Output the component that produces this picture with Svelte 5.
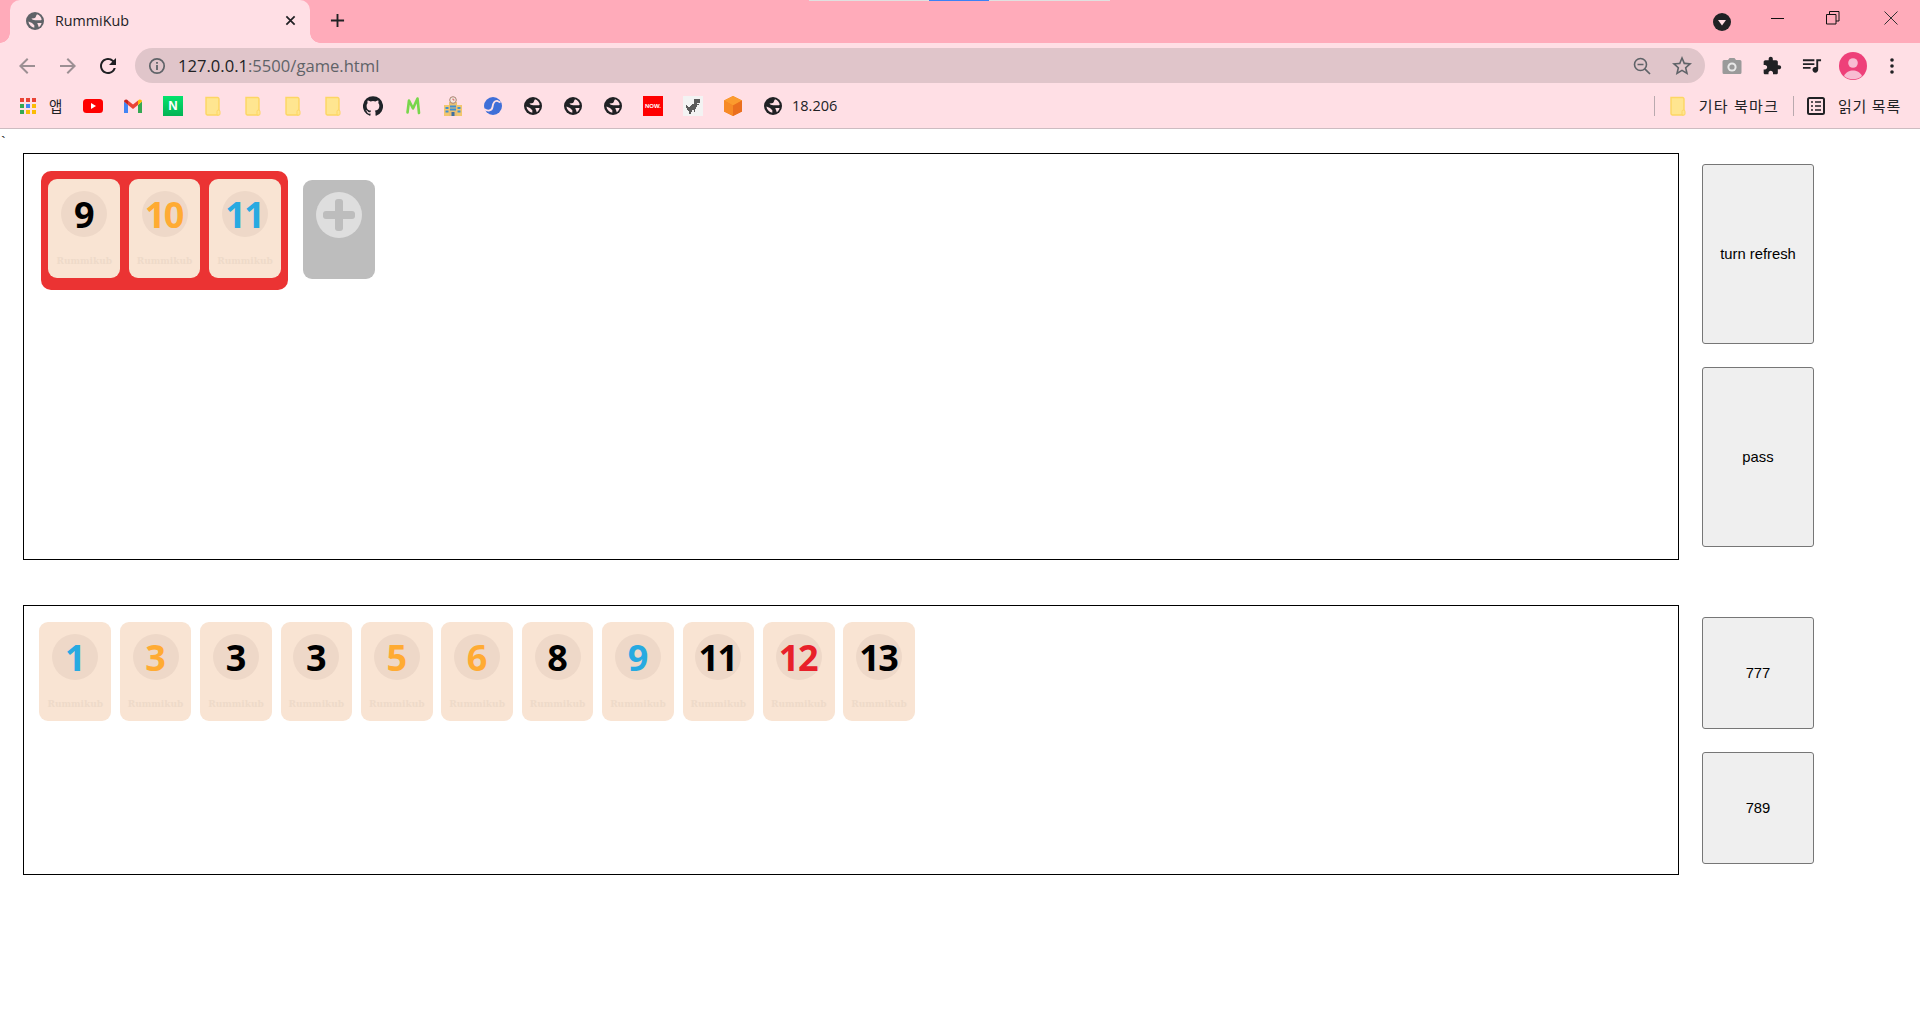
<script>
  const board = [[9, "k"], [10, "o"], [11, "b"]];
  const hand = [[1, "b"], [3, "o"], [3, "k"], [3, "k"], [5, "o"], [6, "o"], [8, "k"], [9, "b"], [11, "k"], [12, "r"], [13, "k"]];
  const appColors = ["#ea4335", "#ea4335", "#ea4335", "#34a853", "#4285f4", "#fbbc05", "#34a853", "#fbbc05", "#fbbc05"];
</script>

{#snippet tile(n, c)}
  <div class="tile">
    <div class="circle"><span class="num {c}">{n}</span></div>
    <div class="brand">Rummikub</div>
  </div>
{/snippet}

{#snippet folder()}
  <svg class="ic16" viewBox="0 0 16 20"><path d="M1 1.5h11.5a1.5 1.5 0 0 1 1.5 1.5v15a1 1 0 0 1-1 1H2.5A1.5 1.5 0 0 1 1 17.5z" fill="#ffe590" stroke="#fdd663" stroke-width="1.4"/><path d="M12 19v-3.5a1.5 1.5 0 0 1 3 0V18a1 1 0 0 1-1 1z" fill="#ffe590" stroke="#fdd663"/></svg>
{/snippet}

{#snippet globeIcon(dark)}
  <svg class="ic18" viewBox="0 0 18 18">
    <circle cx="9" cy="9" r="9" fill={dark ? "#202124" : "#5f6368"}/>
    <path fill="#ffdfe5" d="M11 2.300C13.500 3 15.200 5 15.700 7.500L15 8.200H9.200C7.500 8.200 6 7.600 5.500 6.600L8 6.200C9.200 6 10 5 10 4z"/>
    <path fill="#ffdfe5" d="M2.400 9.500L6 11L8.300 13.300V15.700C5 15.200 2.900 12.500 2.400 9.500z"/>
    <path fill="#ffdfe5" d="M11.300 11H15.600C15.200 12.800 14.200 14.300 12.700 15.200C12.500 13.500 11.500 12.200 11.300 11z"/>
  </svg>
{/snippet}

<div class="chrome">
  <div class="share"><i class="g1"></i><i class="g2"></i><i class="g3"></i></div>
  <div class="strip">
    <div class="tab">
      {@render globeIcon(false)}
      <span class="title">RummiKub</span>
      <svg class="tabx" viewBox="0 0 12 12"><path d="M1.500 1.500l9 9M10.500 1.500l-9 9" stroke="#202124" stroke-width="1.900"/></svg>
    </div>
    <svg class="newtab" viewBox="0 0 16 16"><path d="M8 1v14M1 8h14" stroke="#202124" stroke-width="2"/></svg>
    <div class="wincontrols">
      <svg class="media" viewBox="0 0 18 18"><circle cx="9" cy="9" r="9" fill="#202124"/><path d="M5 7h8l-4 5.500z" fill="#ffdfe5"/></svg>
      <svg class="wc min" viewBox="0 0 14 14"><path d="M0 7.500h13" stroke="#111" stroke-width="1"/></svg>
      <svg class="wc max" viewBox="0 0 14 14"><path d="M.5 3.500h9.500v9.500H.5zM3.500 3.500V.5h9.500v9.500H10" fill="none" stroke="#111"/></svg>
      <svg class="wc cls" viewBox="0 0 14 14"><path d="M.5.5l13 13M13.500.5l-13 13" stroke="#333" stroke-width="1"/></svg>
    </div>
  </div>

  <div class="toolbar">
    <div class="nav">
      <svg class="nb" viewBox="0 0 24 24"><path fill="#9c8f93" d="M20 11H7.830l5.590-5.590L12 4l-8 8 8 8 1.410-1.410L7.830 13H20v-2z"/></svg>
      <svg class="nb" viewBox="0 0 24 24"><path fill="#9c8f93" d="M4 11h12.170l-5.590-5.590L12 4l8 8-8 8-1.410-1.410L16.170 13H4v-2z"/></svg>
      <svg class="nb reload" viewBox="0 0 24 24"><path fill="#202124" d="M17.650 6.350A7.950 7.950 0 0 0 12 4c-4.420 0-7.990 3.580-7.990 8s3.570 8 7.990 8c3.730 0 6.840-2.550 7.730-6h-2.080A5.990 5.990 0 0 1 12 18c-3.310 0-6-2.690-6-6s2.690-6 6-6c1.660 0 3.140.690 4.220 1.780L13 11h7V4l-2.350 2.350z"/></svg>
    </div>
    <div class="omni">
      <svg class="info" viewBox="0 0 18 18"><circle cx="9" cy="9" r="7.200" fill="none" stroke="#5f6368" stroke-width="1.700"/><path d="M9 8v5M9 5v1.800" stroke="#5f6368" stroke-width="1.800"/></svg>
      <span class="url"><b>127.0.0.1</b>:5500/game.html</span>
      <svg class="oi zoomout" viewBox="0 0 18 18"><circle cx="7.500" cy="7.500" r="6" fill="none" stroke="#5f6368" stroke-width="1.600"/><path d="M4.500 7.500h6M11.800 11.800l5.200 5.200" stroke="#5f6368" stroke-width="1.700"/></svg>
      <svg class="oi star" viewBox="0 0 24 24"><path fill="#5f6368" d="M22 9.240l-7.190-.620L12 2 9.190 8.630 2 9.240l5.460 4.730L5.820 21 12 17.270 18.180 21l-1.630-7.030L22 9.240zM12 15.400l-3.760 2.270 1-4.280-3.320-2.880 4.380-.380L12 6.100l1.710 4.040 4.380.380-3.320 2.880 1 4.280L12 15.400z"/></svg>
    </div>
    <div class="actions">
      <svg class="act" viewBox="0 0 20 18"><path fill="#9a9a9a" d="M2 3h4l1.500-2h5L14 3h4a1.500 1.500 0 0 1 1.500 1.500v11A1.500 1.500 0 0 1 18 17H2a1.500 1.500 0 0 1-1.500-1.500v-11A1.500 1.500 0 0 1 2 3z"/><circle cx="10" cy="10" r="4.600" fill="#e8e8e8"/><circle cx="10" cy="10" r="2.600" fill="#9a9a9a"/></svg>
      <svg class="act" viewBox="0 0 24 24"><path fill="#202124" d="M20.500 11H19V7c0-1.100-.9-2-2-2h-4V3.500C13 2.120 11.880 1 10.500 1S8 2.120 8 3.500V5H4c-1.100 0-1.990.9-1.990 2v3.800H3.500c1.490 0 2.700 1.210 2.700 2.700s-1.210 2.700-2.700 2.700H2V20c0 1.100.9 2 2 2h3.800v-1.500c0-1.490 1.210-2.700 2.700-2.700 1.490 0 2.700 1.210 2.700 2.700V22H17c1.100 0 2-.9 2-2v-4h1.500c1.380 0 2.500-1.120 2.500-2.500S21.880 11 20.500 11z"/></svg>
      <svg class="act" viewBox="2 5 21 16"><path fill="#202124" d="M15 6H3v2h12V6zm0 4H3v2h12v-2zM3 16h8v-2H3v2zM17 6v8.180c-.31-.11-.65-.18-1-.18-1.660 0-3 1.340-3 3s1.340 3 3 3 3-1.340 3-3V8h3V6h-5z"/></svg>
      <svg class="avatar" viewBox="0 0 28 28"><circle cx="14" cy="14" r="14" fill="#ee4079"/><circle cx="14" cy="11" r="4.800" fill="#f8bcd2"/><path d="M5 24c2-4 5.500-5.500 9-5.500s7 1.500 9 5.500a14 14 0 0 1-18 0z" fill="#f8bcd2"/></svg>
      <svg class="dots" viewBox="0 0 4 16"><circle cx="2" cy="2" r="1.800" fill="#202124"/><circle cx="2" cy="8" r="1.800" fill="#202124"/><circle cx="2" cy="14" r="1.800" fill="#202124"/></svg>
    </div>
  </div>

  <div class="bookmarks">
    <div class="apps">
      <div class="appgrid">{#each appColors as c}<i style="background:{c}"></i>{/each}</div>
      <span class="bmtext app">앱</span>
    </div>
    <div class="slot"><svg class="yt" viewBox="0 0 20 14"><rect width="20" height="14" rx="3.500" fill="#f00"/><path d="M8 4l5 3-5 3z" fill="#fff"/></svg></div>
    <div class="slot"><svg class="gm" viewBox="0 0 18 14"><path d="M0 2.500V14h4V6z" fill="#4285f4"/><path d="M18 2.500V14h-4V6z" fill="#34a853"/><path d="M4 6V1.500l5 4 5-4V6L9 10z" fill="#ea4335"/><path d="M0 2.500C0 .5 2.500-.5 4 1.500V6z" fill="#c5221f"/><path d="M18 2.500C18 .5 15.500-.5 14 1.500V6z" fill="#fbbc04"/></svg></div>
    <div class="slot"><div class="naver">N</div></div>
    <div class="slot">{@render folder()}</div>
    <div class="slot">{@render folder()}</div>
    <div class="slot">{@render folder()}</div>
    <div class="slot">{@render folder()}</div>
    <div class="slot"><svg class="ic20" viewBox="0 0 24 24"><path fill="#1f2328" d="M12 .3a12 12 0 0 0-3.800 23.400c.6.1.8-.3.8-.6v-2c-3.300.7-4-1.600-4-1.600-.6-1.400-1.400-1.800-1.400-1.800-1-.7.1-.7.1-.7 1.200 0 1.900 1.200 1.900 1.200 1 1.800 2.800 1.300 3.500 1 0-.8.4-1.300.7-1.600-2.700-.3-5.500-1.300-5.500-6 0-1.200.5-2.300 1.300-3.100-.2-.4-.6-1.600 0-3.200 0 0 1-.3 3.400 1.200a11.500 11.500 0 0 1 6 0c2.300-1.500 3.300-1.200 3.300-1.200.6 1.600.2 2.800 0 3.200.9.8 1.300 1.900 1.300 3.200 0 4.600-2.800 5.600-5.500 5.900.5.400.9 1 .9 2.200v3.300c0 .3.1.7.8.6A12 12 0 0 0 12 .3"/></svg></div>
    <div class="slot"><svg class="ic20" viewBox="0 0 16 20"><path d="M2.500 16.500L4 4.500l4 8 4.500-10 1.500 14.500" fill="none" stroke="#78d64b" stroke-width="2.600" stroke-linecap="round" stroke-linejoin="round"/></svg></div>
    <div class="slot"><svg class="ic20" viewBox="0 0 20 20"><rect x="1" y="9" width="18" height="11" fill="#f2c66d"/><rect x="6" y="6" width="8" height="14" fill="#e9bf73"/><path d="M2.500 11h3v2h-3zM2.500 14.500h3v2h-3zM14.500 11h3v2h-3zM14.500 14.500h3v2h-3zM7 9.500h6v2H7zM7 12.500h6v2H7z" fill="#3f8fd0"/><rect x="8.500" y="16" width="3" height="4" fill="#3f6fa0"/><circle cx="10" cy="4" r="3.300" fill="#f4e7e0" stroke="#a9826f"/><path d="M10 2.500V4h1.500" stroke="#d14343" fill="none" stroke-width=".8"/></svg></div>
    <div class="slot"><svg class="ic18" viewBox="0 0 18 18"><circle cx="9" cy="9" r="9" fill="#3f6fd8"/><path d="M0 12c4 3 8 1.500 8.500-2s1.500-6.500 5-6l3 1.500" fill="none" stroke="#ffdfe5" stroke-width="1.800"/></svg></div>
    <div class="slot">{@render globeIcon(true)}</div>
    <div class="slot">{@render globeIcon(true)}</div>
    <div class="slot">{@render globeIcon(true)}</div>
    <div class="slot"><div class="now">NOW.</div></div>
    <div class="slot"><svg class="dino" viewBox="0 0 20 20"><rect width="20" height="20" fill="#f3f3f3"/><path fill="#5a5a5a" d="M11 3h6v4h-3v1h2v1h-2v2h-1v2h-1v3h-1v-2H9v2H8v2H6v-3H5v-1H4v-2H3V9h1v1h1v1h2v-1h1V9h1V8h2z"/></svg></div>
    <div class="slot"><svg class="ic20" viewBox="0 0 20 20"><path d="M10 0l9 4.500v11L10 20 1 15.500v-11z" fill="#f58220"/><path d="M10 0l9 4.500-9 5-9-5z" fill="#fb9b2e"/><path d="M10 9.500V20l-9-4.500v-11z" fill="#f78a26"/><path d="M10 9.500l9-5v11L10 20z" fill="#ea6f1e"/></svg></div>
    <div class="slot">{@render globeIcon(true)}</div>
    <span class="bmtext num18">18.206</span>
    <div class="bmright">
      <i class="sep"></i>
      {@render folder()}
      <span class="bmtext other">기타 북마크</span>
      <i class="sep sep2"></i>
      <svg class="ic18 rl" viewBox="0 0 18 18"><rect x="1" y="1" width="16" height="16" rx="1.500" fill="none" stroke="#202124" stroke-width="2"/><path d="M4 5h2M8 5h6M4 9h2M8 9h6M4 13h2M8 13h6" stroke="#202124" stroke-width="1.600"/></svg>
      <span class="bmtext read">읽기 목록</span>
    </div>
  </div>
</div>

<main class="page">
  <div class="tick">`</div>
  <section class="row board-row">
    <div class="panel board">
      <div class="set">
        {#each board as [n, c]}{@render tile(n, c)}{/each}
      </div>
      <div class="addtile">
        <div class="addcircle"><i class="bar h"></i><i class="bar v"></i></div>
      </div>
    </div>
    <div class="side tall">
      <button>turn refresh</button>
      <button>pass</button>
    </div>
  </section>
  <section class="row hand-row">
    <div class="panel hand">
      {#each hand as [n, c]}{@render tile(n, c)}{/each}
    </div>
    <div class="side short">
      <button>777</button>
      <button>789</button>
    </div>
  </section>
</main>

<style>
  :global(body) { margin: 0; background: #fff; }
  * { box-sizing: border-box; }
  .chrome { position: relative; font-family: "Open Sans", "Noto Sans CJK KR", sans-serif; color: #202124; }

  .share { position: absolute; left: 809px; top: 0; display: flex; height: 1px; z-index: 2; }
  .share i { display: block; height: 1px; }
  .g1 { width: 120px; background: #e0e0e0; }
  .g2 { width: 60px; background: #3b82f6; }
  .g3 { width: 121px; background: #e0e0e0; }

  .strip { height: 43px; background: #ffabba; display: flex; align-items: center; padding-left: 10px; }
  .tab { position: relative; align-self: stretch; width: 300px; background: #ffdfe5; border-radius: 10px 10px 0 0; display: flex; align-items: center; padding: 0 14px 2px 16px; }
  .tab::before, .tab::after { content: ""; position: absolute; bottom: 0; width: 10px; height: 10px; }
  .tab::before { left: -10px; background: radial-gradient(circle at 0 0, #ffabba 9.500px, #ffdfe5 10px); }
  .tab::after { right: -10px; background: radial-gradient(circle at 100% 0, #ffabba 9.500px, #ffdfe5 10px); }
  .title { margin-left: 11px; font-size: 14.300px; flex: 1; }
  .tabx { width: 11px; height: 11px; }
  .newtab { width: 15px; height: 15px; margin-left: 20px; margin-bottom: 2px; }
  .wincontrols { margin-left: auto; display: flex; align-items: center; padding-right: 22px; }
  .media { width: 18px; height: 18px; margin-right: 40px; margin-top: 1px; }
  .wc { width: 14px; height: 14px; margin-top: -8px; }
  .min { margin-right: 41px; }
  .max { margin-right: 44px; }

  .toolbar { height: 40px; background: #ffdfe5; display: flex; align-items: center; padding-top: 5px; }
  .nav { width: 135px; display: flex; align-items: center; padding-left: 15px; gap: 17px; }
  .nb { width: 24px; height: 24px; }
  .reload { margin-left: -1px; }
  .omni { width: 1570px; height: 35px; border-radius: 18px; background: #e0c5ca; display: flex; align-items: center; padding-left: 13px; padding-right: 11px; }
  .info { width: 18px; height: 18px; }
  .url { margin-left: 12px; font-size: 16.600px; color: #5f6368; flex: 1; }
  .url b { font-weight: 400; color: #202124; }
  .oi { flex: none; }
  .zoomout { width: 18px; height: 18px; margin-right: 19px; }
  .star { width: 24px; height: 24px; }
  .actions { flex: 1; display: flex; align-items: center; padding-left: 17px; }
  .act { width: 20px; height: 20px; margin-right: 20px; }
  .avatar { width: 28px; height: 28px; margin-left: -3px; }
  .dots { width: 4px; height: 16px; margin-left: 23px; }

  .bookmarks { height: 46px; background: #ffdfe5; border-bottom: 1px solid #cdbcc1; display: flex; align-items: center; }
  .apps { width: 73px; display: flex; align-items: center; padding-left: 20px; }
  .appgrid { width: 16px; height: 16px; display: grid; grid-template-columns: repeat(3, 4px); grid-auto-rows: 4px; gap: 2px; }
  .appgrid i { display: block; }
  .bmtext { font-size: 14.500px; }
  .app { margin-left: 13px; }
  .slot { width: 40px; display: flex; justify-content: center; align-items: center; flex: none; }
  .yt { width: 20px; height: 14px; }
  .ic16 { width: 16px; height: 20px; }
  .gm { width: 18px; height: 14px; }
  .ic20 { width: 20px; height: 20px; }
  .ic18 { width: 18px; height: 18px; flex: none; }
  .naver { width: 20px; height: 20px; background: linear-gradient(#03e36d, #03b354); color: #fff; font: 700 13px/20px "Liberation Sans", sans-serif; text-align: center; }
  .now { width: 20px; height: 20px; background: #f00; color: #fff; font: 700 6px/20px "Liberation Sans", sans-serif; text-align: center; }
  .dino { width: 20px; height: 20px; }
  .num18 { margin-left: -1px; }
  .bmright { margin-left: auto; display: flex; align-items: center; padding-right: 19px; }
  .sep { display: block; width: 1px; height: 20px; background: #b9a9ae; margin-right: 15px; }
  .other { margin-left: 13px; font-size: 15px; letter-spacing: 1.200px; }
  .sep2 { margin: 0 13px 0 14px; }
  .rl { margin-right: 13px; }
  .read { font-size: 15px; letter-spacing: 0.800px; }

  .page { position: relative; padding: 24px 0 0 23px; }
  .tick { position: absolute; left: 1px; top: 4px; font: 15px "Liberation Sans", sans-serif; color: #222; }
  .row { display: flex; }
  .board-row { height: 407px; margin-bottom: 45px; }
  .hand-row { height: 270px; }
  .panel { width: 1656px; height: 100%; border: 1px solid #000; display: flex; align-items: flex-start; }
  .board { padding: 17px; gap: 15px; }
  .hand { padding: 16px 15px 16px 15.400px; gap: 8.800px; }
  .set { display: flex; gap: 8.800px; padding: 8px 7px 12px 7.400px; background: #eb3333; border-radius: 10px; }
  .tile { width: 71.600px; height: 99px; flex: none; background: #f9e4d3; border-radius: 9px; display: flex; flex-direction: column; align-items: center; padding-top: 12px; }
  .circle { width: 46px; height: 46px; border-radius: 50%; background: #eed8c8; display: flex; align-items: center; justify-content: center; }
  .num { font: 700 36px/46px "Open Sans", sans-serif; margin: 2px 0 0 -1.500px; letter-spacing: -1.500px; }
  .k { color: #000; }
  .o { color: #ffab33; }
  .b { color: #27aae1; }
  .r { color: #e8202a; }
  .brand { margin-top: 17px; font: 700 9px/14px "DejaVu Serif", serif; color: #eedac9; }
  .addtile { width: 72px; height: 99px; margin-top: 9px; flex: none; background: #bdbdbd; border-radius: 9px; padding: 12px 13px; }
  .addcircle { position: relative; width: 46px; height: 46px; border-radius: 50%; background: #dedede; }
  .bar { position: absolute; background: #bdbdbd; border-radius: 3px; }
  .bar.h { left: 7px; top: 19px; width: 32px; height: 8px; }
  .bar.v { left: 19px; top: 7px; width: 8px; height: 32px; }

  .side { width: 112px; margin-left: 23px; display: flex; flex-direction: column; }
  .side button { width: 112px; background: #efefef; border: 1px solid #767676; border-radius: 3px; font: 14.800px "Liberation Sans", sans-serif; color: #000; padding: 0; }
  .tall { padding-top: 11px; gap: 23px; }
  .tall button { height: 180px; }
  .short { padding-top: 12px; gap: 23px; }
  .short button { height: 112px; }
</style>
